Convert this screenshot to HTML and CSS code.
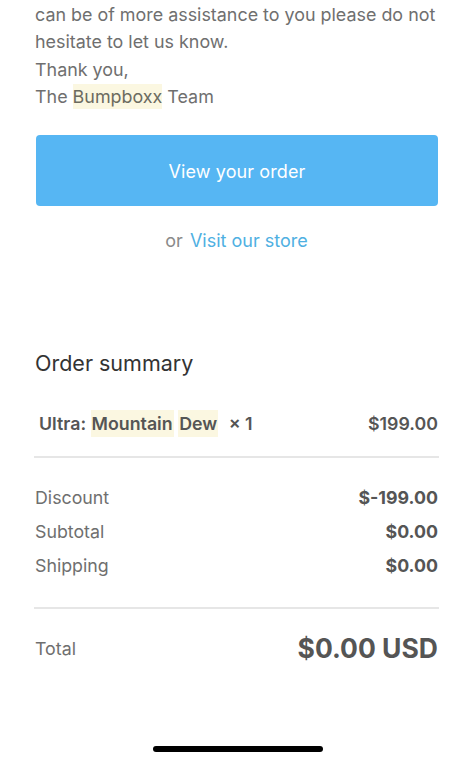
FILE: index.html
```html
<!DOCTYPE html>
<html>
<head>
<meta charset="utf-8">
<link rel="stylesheet" href="styles.css">
</head>
<body>
<div class="page">
  <div class="message">
    <p class="line">can be of more assistance to you please do not</p>
    <p class="line">hesitate to let us know.</p>
    <p class="line">Thank you,</p>
    <p class="line">The <span class="hl">Bumpboxx</span> Team</p>
  </div>
  <div class="actions">
    <a class="button">View your order</a>
    <p class="alt">or <a class="link">Visit our store</a></p>
  </div>
  <div class="summary">
    <h2 class="title">Order summary</h2>
    <div class="item">
      <span class="item-name">Ultra: <span class="hl">Mountain</span> <span class="hl">Dew</span> <span class="qty">× 1</span></span>
      <span class="item-price">$199.00</span>
    </div>
    <div class="rule"></div>
    <div class="lines">
      <div class="row"><span class="label">Discount</span><span class="value">$-199.00</span></div>
      <div class="row"><span class="label">Subtotal</span><span class="value">$0.00</span></div>
      <div class="row"><span class="label">Shipping</span><span class="value">$0.00</span></div>
    </div>
    <div class="rule"></div>
    <div class="total">
      <span class="label">Total</span>
      <span class="total-value">$0.00 USD</span>
    </div>
  </div>
  <div class="home"><div class="home-bar"></div></div>
</div>
</body>
</html>
```

FILE: styles.css
```css
* { box-sizing: border-box; }
html, body { margin: 0; padding: 0; background: #fff; }
body {
  font-family: "Inter", "Roboto", "Liberation Sans", sans-serif;
  color: #777;
  width: 474px;
  height: 760px;
  overflow: hidden;
}
.page {
  padding: 0 36px 0 35px;
  display: flex;
  flex-direction: column;
  height: 760px;
}
.message { margin-top: 1px; }
.line {
  margin: 0;
  font-size: 17.9px;
  line-height: 27.3px;
  color: #6f6f6f;
  white-space: nowrap;
}
.hl { background: #fbf7e1; color: #6b6b60; padding: 2px 0; }
.actions {
  margin-top: 25px;
  display: flex;
  flex-direction: column;
  align-items: stretch;
}
.button {
  display: flex;
  align-items: center;
  justify-content: center;
  height: 71px;
  margin-left: 1px;
  padding-top: 2px;
  background: #56b6f3;
  border-radius: 4px;
  color: #fff;
  font-size: 18px;
  letter-spacing: 0.1px;
}
.alt {
  margin: 24px 0 0;
  text-align: center;
  font-size: 18px;
  line-height: 22px;
  color: #8a8a8a;
}
.link { color: #4fb0e2; margin-left: 2px; }
.summary { margin-top: 97px; }
.title {
  margin: 0;
  font-weight: 400;
  font-size: 21.5px;
  line-height: 28px;
  color: #333;
}
.item {
  margin-top: 35px;
  display: flex;
  justify-content: space-between;
  align-items: center;
  padding: 0 0 0 4px;
  font-size: 17.8px;
  font-weight: 600;
  color: #555;
  line-height: 24px;
}
.item .hl { color: #555; padding: 3px 1px; }
.qty { margin-left: 6px; }
.rule {
  height: 2px;
  background: #e6e6e6;
  margin: 0 -1px 0 -1px;
}
.item + .rule { margin-top: 20px; }
.lines {
  padding-top: 28px;
  padding-bottom: 30px;
  display: flex;
  flex-direction: column;
  gap: 11px;
}
.row {
  display: flex;
  justify-content: space-between;
  align-items: center;
  line-height: 23px;
}
.label { font-size: 17.8px; color: #6f6f6f; }
.value { font-size: 17.8px; font-weight: 700; color: #555; }
.total {
  margin-top: 23px;
  display: flex;
  justify-content: space-between;
  align-items: center;
}
.total-value { font-size: 26.5px; font-weight: 700; color: #555; line-height: 32px; }
.home {
  margin-top: auto;
  height: 14px;
  display: flex;
  justify-content: center;
  padding-left: 2px;
}
.home-bar {
  width: 170px;
  height: 6px;
  border-radius: 3px;
  background: #000;
}
```
